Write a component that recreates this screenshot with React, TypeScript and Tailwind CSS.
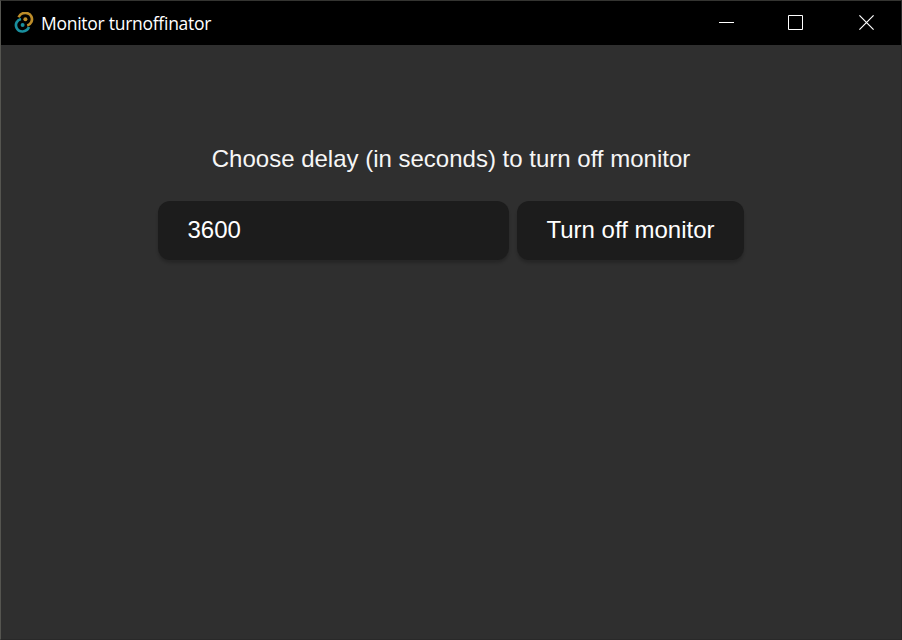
function Logo() {
  return (
    <svg width="20" height="22" viewBox="0 0 20 22" fill="none" strokeWidth="2.7" className="shrink-0">
      <path d="M4.6 5.2C7.2 -.6 15.2 -.1 17.4 4.6C19 8.2 17.1 12.4 13.2 13.5" stroke="#bd8d29" />
      <path d="M15 15.1C12.6 20.9 4.8 20.8 2.5 15.7C.9 12 2.9 7.9 7 7" stroke="#198f9e" />
      <circle cx="11.4" cy="7.3" r="2" fill="#bd8d29" />
      <circle cx="8.6" cy="13" r="2" fill="#198f9e" />
    </svg>
  );
}

function TitleBar() {
  return (
    <header className="flex h-11 shrink-0 items-center bg-black pl-[13px] text-white">
      <Logo />
      <h1 className="ml-[7px] flex-1 whitespace-nowrap font-['Open_Sans',sans-serif] text-[17.5px] leading-6 tracking-[-0.27px]">
        Monitor turnoffinator
      </h1>
      <div className="flex h-full pb-px" shapeRendering="crispEdges">
        <button aria-label="Minimize" className="flex w-[69px] items-center justify-center">
          <svg width="15" height="15" stroke="white"><path d="M0 7.5H15" /></svg>
        </button>
        <button aria-label="Maximize" className="flex w-[69px] items-center justify-center">
          <svg width="15" height="15" fill="none" stroke="white"><path d="M.5 .5H14.5V14.5H.5Z" /></svg>
        </button>
        <button aria-label="Close" className="flex w-[71px] items-center justify-center pl-0.5">
          <svg width="15" height="15" stroke="white" strokeWidth="1.2"><path d="M.4 .4L14.6 14.6M14.6 .4L.4 14.6" /></svg>
        </button>
      </div>
    </header>
  );
}

export default function App() {
  return (
    <div className="flex h-[640px] w-[902px] flex-col border border-[#292929] border-t-[#343431] border-l-[#555550] bg-[#2f2f2f] font-['Liberation_Sans',Arial,sans-serif] text-2xl">
      <TitleBar />
      <main className="flex flex-col items-center pt-[96px]">
        <p className="h-9 leading-9 text-[#f6f6f6]">Choose delay (in seconds) to turn off monitor</p>
        <form className="mt-6 flex gap-2 text-white">
          <input
            aria-label="Delay in seconds"
            defaultValue="3600"
            className="h-[59px] w-[351px] rounded-xl bg-[#1c1c1c] px-[29.5px] pb-0.5 shadow-[0_3px_3px_rgba(0,0,0,0.2)] outline-none"
          />
          <button
            type="button"
            className="h-[59px] w-[227px] whitespace-nowrap rounded-xl bg-[#1c1c1c] pb-0.5 shadow-[0_3px_3px_rgba(0,0,0,0.2)]"
          >
            Turn off monitor
          </button>
        </form>
      </main>
    </div>
  );
}
